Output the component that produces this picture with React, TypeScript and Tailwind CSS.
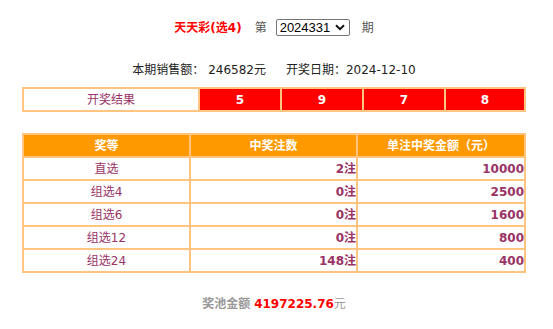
import React from "react";

const F = { fontFamily: '"DejaVu Sans", "Noto Sans CJK SC", sans-serif' };

export default function App() {
  const rows = [
    ["直选", "2注", "10000"],
    ["组选4", "0注", "2500"],
    ["组选6", "0注", "1600"],
    ["组选12", "0注", "800"],
    ["组选24", "148注", "400"],
  ];
  return (
    <div className="w-[548px] bg-white text-[12px] leading-[14px]" style={F}>
      <div className="mt-[19px] flex h-[17px] items-center justify-center">
        <span className="font-bold text-[#ff0000]">天天彩(选4)</span>
        <span className="ml-[13px] text-[#555]">第</span>
        <div className="ml-[9px] flex h-[17px] w-[74px] items-center rounded-[2px] border border-[#767676] bg-white pl-[3px] pr-[4px]">
          <span className="text-[13px] leading-[15px] text-black" style={{ fontFamily: '"Liberation Sans", Arial, sans-serif' }}>
            2024331
          </span>
          <svg className="ml-auto" width="10" height="7" viewBox="0 0 10 7">
            <path d="M1 1.2 L5 5.2 L9 1.2" fill="none" stroke="#111" strokeWidth="2" />
          </svg>
        </div>
        <span className="ml-[12px] text-[#555]">期</span>
      </div>

      <div className="mt-[27px] flex h-[14px] items-center justify-center text-[#222]">
        <span>本期销售额： 246582元</span>
        <span className="ml-[20px]">开奖日期：2024-12-10</span>
      </div>

      <div className="mx-auto mt-[10px] grid w-[504px] grid-cols-[174px_80px_80px_80px_78px] gap-[2px] bg-[#ffc47f] p-[2px]">
        <div className="flex h-[21px] items-center justify-center bg-white text-[#993366]">开奖结果</div>
        {["5", "9", "7", "8"].map((n) => (
          <div key={n} className="flex h-[21px] items-center justify-center bg-[#ff0000] font-bold text-white">
            {n}
          </div>
        ))}
      </div>

      <div className="mx-auto mt-[21px] grid w-[504px] grid-cols-[165px_165px_166px] gap-[2px] bg-[#ffc47f] p-[2px]">
        {["奖等", "中奖注数", "单注中奖金额（元）"].map((h) => (
          <div key={h} className="flex h-[21px] items-center justify-center bg-[#ff9900] font-bold text-white">
            {h}
          </div>
        ))}
        {rows.map((r) => (
          <React.Fragment key={r[0]}>
            <div className="flex h-[21px] items-center justify-center bg-white text-[#993366]">{r[0]}</div>
            <div className="flex h-[21px] items-center justify-end bg-white font-bold text-[#993366]">{r[1]}</div>
            <div className="flex h-[21px] items-center justify-end bg-white font-bold text-[#993366]">{r[2]}</div>
          </React.Fragment>
        ))}
      </div>

      <div className="mt-[24px] flex h-[14px] items-center justify-center">
        <span className="font-bold text-[#999]">奖池金额</span>
        <span className="ml-[4px] font-bold text-[#ff0000]">4197225.76</span>
        <span className="text-[#999]">元</span>
      </div>
      <div className="h-[19px]" />
    </div>
  );
}
